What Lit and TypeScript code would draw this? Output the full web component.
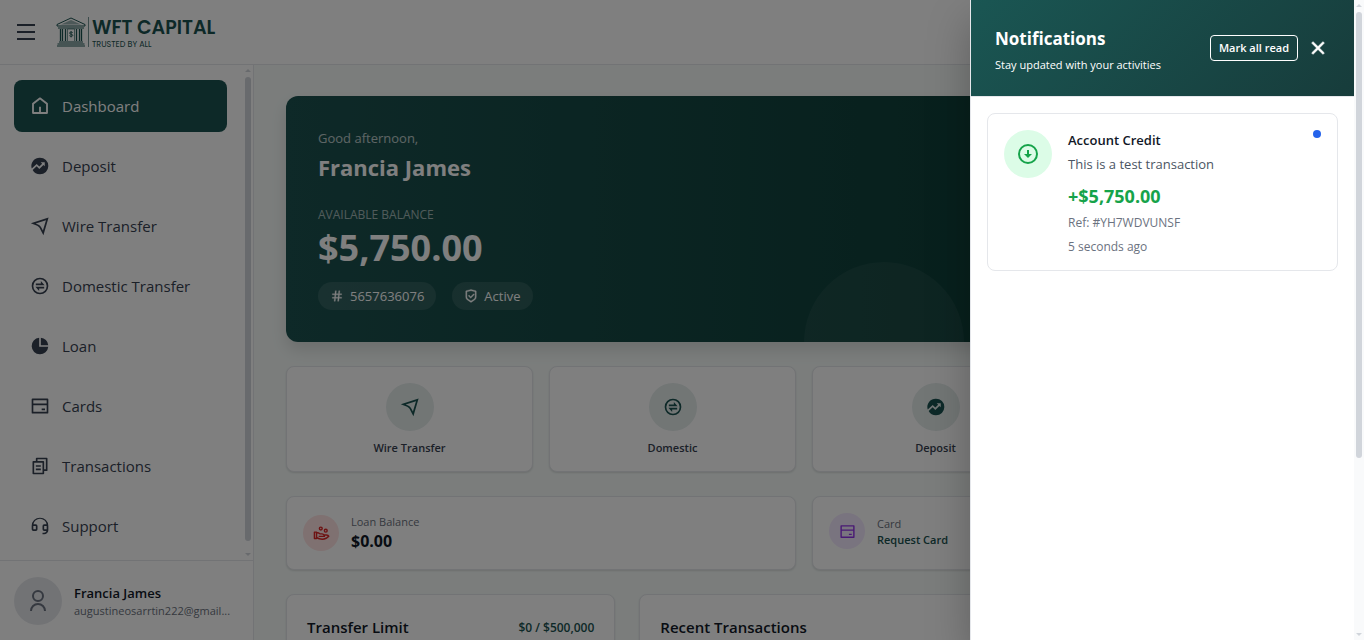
import { LitElement, html, css, svg } from "lit";
import { customElement, property, state } from "lit/decorators.js";
import { classMap } from "lit/directives/class-map.js";

const icons: Record<string, unknown> = {
  home: svg`<path fill-rule="evenodd" d="M21.500 20.500a1 1 0 0 1-1 1h-17a1 1 0 0 1-1-1V9.300a1 1 0 0 1 .4-.8l8.500-6.600a1 1 0 0 1 1.200 0l8.500 6.600a1 1 0 0 1 .4.8v11.200Zm-2.200-1.200V9.900L12 4.300 4.700 9.900v9.400h6.200V13h2.200v6.300h6.200Z"/>`,
  trend: svg`<path fill-rule="evenodd" d="M12 2a10 10 0 0 1 10 10 10 10 0 0 1-10 10A10 10 0 0 1 3.200 16.800L8 12.400l3.200 3.100 4.900-4.800 1.600 1.600V7.600h-4.900l1.800 1.700-3.400 3.400-3.200-3.200-5.900 5.600A10 10 0 0 1 12 2Z"/>`,
  plane: svg`<path fill-rule="evenodd" d="M1 8.700 22.300 1.900 16.100 23 11.400 14.200Q10.500 12.400 8.600 11.600ZM6.800 9.100l2.900 1.200q2.300.9 3.500 3l2.300 4.200L19.200 5Z"/>`,
  exchange: svg`<path fill-rule="evenodd" d="M12 22a10 10 0 1 1 0-20 10 10 0 0 1 0 20Zm0-2a8 8 0 1 0 0-16 8 8 0 0 0 0 16ZM7 9h6V6l4.500 5H7V9Zm10 4v2h-6v3l-4.500-5H17Z"/>`,
  pie: svg`<path d="M11 2.050V13h10.950A10 10 0 1 1 11 2.050ZM13 2.050A10 10 0 0 1 21.950 11H13V2.050Z"/>`,
  card: svg`<path fill-rule="evenodd" d="M3 3h18a1 1 0 0 1 1 1v16a1 1 0 0 1-1 1H3a1 1 0 0 1-1-1V4a1 1 0 0 1 1-1Zm17 8H4v8h16v-8Zm0-2V5H4v4h16Zm-6 6h4v2h-4v-2Z"/>`,
  copy: svg`<path fill-rule="evenodd" d="M7 6V3a1 1 0 0 1 1-1h12a1 1 0 0 1 1 1v14a1 1 0 0 1-1 1h-3v3a1 1 0 0 1-1 1H4a1 1 0 0 1-1-1V7a1 1 0 0 1 1-1h3ZM5 8v12h10V8H5Zm4-2h7a1 1 0 0 1 1 1v9h2V4H9v2ZM7 11h6v2H7v-2Zm0 4h6v2H7v-2Z"/>`,
  headset: svg`<path fill-rule="evenodd" d="M22 17a5 5 0 0 1-5 5h-2v-2h2a3 3 0 0 0 2.800-2H17a2 2 0 0 1-2-2v-4a2 2 0 0 1 2-2h2.900a8 8 0 0 0-15.800 0H7a2 2 0 0 1 2 2v4a2 2 0 0 1-2 2H4a2 2 0 0 1-2-2v-4a10 10 0 0 1 20 0v5ZM20 12h-3v4h3v-4ZM4 12v4h3v-4H4Z"/>`,
  user: svg`<path d="M4 22a8 8 0 1 1 16 0h-2a6 6 0 0 0-12 0H4Zm8-9a6 6 0 1 1 0-12 6 6 0 0 1 0 12Zm0-2a4 4 0 1 0 0-8 4 4 0 0 0 0 8Z"/>`,
  hash: svg`<path fill-rule="evenodd" d="M7.780 14 8.200 10H4V8h4.410l.530-5h2.010l-.520 5h3.980l.530-5h2.010l-.520 5H20v2h-3.780l-.420 4H20v2h-4.410l-.530 5h-2.010l.520-5H9.590l-.530 5H7.050l.520-5H4v-2h3.780Zm2.020 0h3.980l.420-4h-3.980l-.420 4Z" stroke="currentColor" stroke-width=".5"/>`,
  shield: svg`<path fill-rule="evenodd" stroke="currentColor" stroke-width=".6" d="m12 1 8.217 1.826a1 1 0 0 1 .783.976v9.987a6 6 0 0 1-2.672 4.992L12 23l-6.328-4.219A6 6 0 0 1 3 13.789V3.802a1 1 0 0 1 .783-.976L12 1Zm0 2.049L5 4.604v9.185a4 4 0 0 0 1.781 3.328L12 20.597l5.219-3.480A4 4 0 0 0 19 13.790V4.604L12 3.049Zm4.452 5.173 1.415 1.414L11.503 16 7.260 11.757l1.414-1.414 2.828 2.828 4.950-4.949Z"/>`,
  coins: svg`<path fill-rule="evenodd" d="M5 9a1 1 0 0 1 1 1 6.970 6.970 0 0 1 4.330 1.500h2.170c1.330 0 2.530.580 3.350 1.500H19a5 5 0 0 1 4.520 2.850C21.150 18.970 17.320 21 13 21c-2.790 0-5.150-.600-7.060-1.660A1 1 0 0 1 5 20H2a1 1 0 0 1-1-1v-9a1 1 0 0 1 1-1h3Zm1 3v5.020l.050.040C7.840 18.320 10.180 19 13 19c3 0 5.690-1.140 7.610-2.990l.130-.120A3 3 0 0 0 19 15h-2.110c.070.320.110.660.110 1v1H8v-2h6.790l-.030-.090a2.500 2.500 0 0 0-2.260-1.410H9.570A5 5 0 0 0 6 12ZM4 11H3v7h1v-7Zm14-6a3 3 0 1 1 0 6 3 3 0 0 1 0-6Zm0 2a1 1 0 1 0 0 2 1 1 0 0 0 0-2Zm-7-5a3 3 0 1 1 0 6 3 3 0 0 1 0-6Zm0 2a1 1 0 1 0 0 2 1 1 0 0 0 0-2Z"/>`,
  down: svg`<path fill-rule="evenodd" d="M12 2a10 10 0 1 1 0 20 10 10 0 0 1 0-20Zm0 18a8 8 0 1 0 0-16 8 8 0 0 0 0 16Zm1-8h3l-4 4-4-4h3V8h2v4Z"/>`,
  close: svg`<path d="m12 10.586 4.950-4.950 1.414 1.414L13.414 12l4.950 4.950-1.414 1.414L12 13.414l-4.950 4.950-1.414-1.414L10.586 12l-4.950-4.950L7.050 5.636 12 10.586Z" stroke="currentColor" stroke-width=".6"/>`,
  menu: svg`<path d="M3 4h18v2H3V4Zm0 7h18v2H3v-2Zm0 7h18v2H3v-2Z"/>`,
};

@customElement("ui-icon")
export class UiIcon extends LitElement {
  @property() name = "";
  static styles = css`
    :host { display: block; flex: none; width: 20px; height: 20px; }
    svg { display: block; width: 100%; height: 100%; }
  `;
  render() {
    return html`<svg viewBox="0 0 24 24" fill="currentColor" aria-hidden="true">${icons[this.name]}</svg>`;
  }
}

@customElement("scroll-track")
export class ScrollTrack extends LitElement {
  static styles = css`
    :host { display: flex; flex-direction: column; align-items: center; justify-content: space-between; width: 10px; padding: 4px 0; box-sizing: border-box; color: #d1d5db; }
    svg { display: block; width: 6px; height: 3px; fill: currentColor; }
    .lane { flex: 1; align-self: stretch; display: flex; flex-direction: column; margin: 5px 2px; }
    .thumb { border-radius: 3px; background: currentColor; }
  `;
  @property({ type: Number }) ratio = 1;
  render() {
    return html`
      <svg viewBox="0 0 6 3"><path d="M0 3 3 0l3 3Z" /></svg>
      <div class="lane"><div class="thumb" style="height:${this.ratio * 100}%"></div></div>
      <svg viewBox="0 0 6 3"><path d="M0 0h6L3 3Z" /></svg>
    `;
  }
}

const navItems = [
  ["home", "Dashboard"],
  ["trend", "Deposit"],
  ["plane", "Wire Transfer"],
  ["exchange", "Domestic Transfer"],
  ["pie", "Loan"],
  ["card", "Cards"],
  ["copy", "Transactions"],
  ["headset", "Support"],
];

const quickActions = [
  ["plane", "Wire Transfer"],
  ["exchange", "Domestic"],
  ["trend", "Deposit"],
];

@customElement("app-root")
export class AppRoot extends LitElement {
  @state() private active = "Dashboard";

  static styles = css`
    :host {
      display: grid;
      grid-template-columns: 1fr 10px;
      height: 100vh;
      overflow: hidden;
      font-family: "Segoe UI", "Open Sans", "Noto Sans", sans-serif;
      font-size: 15px;
      line-height: 24px;
      color: #111827;
      background: #f9fafb;
    }
    * { box-sizing: border-box; }
    h1, h2, h3, p { margin: 0; }
    a { color: inherit; text-decoration: none; }
    button { font: inherit; color: inherit; border: 0; background: none; padding: 0; cursor: pointer; }

    .page { position: relative; display: flex; flex-direction: column; min-width: 0; min-height: 0; overflow: hidden; background: #f6fbf9; }
    .topbar { display: flex; align-items: center; gap: 18px; flex: none; height: 65px; padding: 0 14px; background: #fff; border-bottom: 1px solid #e5e7eb; }
    .menu { color: #374151; }
    .menu ui-icon { width: 24px; height: 24px; }
    .brand { display: flex; align-items: center; color: #1a5250; }
    .brand svg { display: block; width: 34px; height: 30px; }
    .brand-text { display: flex; flex-direction: column; padding: 4px 0 0 2px; }
    .brand-name { font: 600 19px/22px Poppins, Inter, sans-serif; }
    .brand-tag { font: 400 8px/12px Poppins, Inter, sans-serif; }

    .columns { display: flex; flex: 1; min-height: 0; }
    .sidebar { display: flex; flex-direction: column; flex: none; width: 254px; background: #fff; border-right: 1px solid #e5e7eb; }
    .scroller { display: flex; flex: 1; min-height: 0; }
    nav { display: flex; flex: 1; flex-direction: column; gap: 8px; padding: 15px 16px 0 14px; }
    .nav-link { display: flex; align-items: center; gap: 12px; height: 52px; padding: 0 16px; border-radius: 8px; color: #374151; }
    .nav-link.active { background: #1a5250; color: #fff; }
    .profile { display: flex; align-items: center; gap: 12px; flex: none; height: 80px; padding: 0 14px; border-top: 1px solid #e5e7eb; }
    .avatar { display: grid; place-items: center; flex: none; width: 48px; height: 48px; border-radius: 50%; background: #e5e7eb; color: #6b7280; }
    .avatar ui-icon { width: 24px; height: 24px; }
    .who { flex: 1; min-width: 0; }
    .who-name { font-size: 13px; line-height: 20px; font-weight: 600; }
    .who-mail { font-size: 11px; line-height: 16px; color: #6b7280; white-space: nowrap; }

    main { display: flex; flex: 1; flex-direction: column; gap: 24px; min-width: 0; padding: 31px 32px 0; }
    .hero { position: relative; flex: none; padding: 32px; border-radius: 12px; overflow: hidden; color: #fff; background: linear-gradient(90deg, #1c5250, #0e3f38 70%, #0b3a33); }
    .hero-wrap { flex: none; border-radius: 12px; box-shadow: 0 8px 16px rgba(0, 0, 0, 0.12); }
    .bubble { position: absolute; left: 50%; bottom: -80px; width: 160px; height: 160px; border-radius: 50%; background: rgba(255, 255, 255, 0.05); }
    .greeting { font-size: 13px; line-height: 20px; opacity: 0.7; }
    .hero h1 { font-size: 22px; line-height: 32px; font-weight: 700; padding-top: 3px; }
    .caption { padding-top: 22px; font-size: 12px; line-height: 20px; color: rgba(255, 255, 255, 0.6); text-transform: uppercase; }
    .balance { font-size: 36px; line-height: 46px; font-weight: 700; }
    .chips { display: flex; gap: 16px; padding-top: 11px; }
    .chip { display: flex; align-items: center; gap: 6px; height: 28px; padding: 0 12px; border-radius: 14px; font-size: 13px; background: rgba(255, 255, 255, 0.1); }
    .chip ui-icon { width: 14px; height: 14px; }

    .card { background: #fff; border: 1px solid #e5e7eb; border-radius: 8px; box-shadow: 0 1px 2px rgba(0, 0, 0, 0.12); }
    .quick, .summary { display: grid; grid-template-columns: repeat(4, 1fr); gap: 16px; flex: none; }
    .action { display: flex; flex-direction: column; align-items: center; gap: 8px; padding: 16px 16px 14px; color: #374151; font-size: 11px; line-height: 18px; font-weight: 600; }
    .action .disc { width: 48px; height: 48px; background: #e4eceb; color: #1a5250; }
    .disc { display: grid; place-items: center; flex: none; width: 36px; height: 36px; border-radius: 50%; }
    .stat { grid-column: span 2; display: flex; align-items: center; gap: 12px; height: 74px; padding: 0 16px; }
    .stat.top { align-items: flex-start; padding-top: 16px; }
    .stat ui-icon { width: 17px; height: 17px; }
    .red { background: #fee2e2; color: #dc2626; }
    .purple { background: #f3e8ff; color: #9333ea; }
    .label { font-size: 11px; line-height: 16px; color: #6b7280; }
    .amount { font-size: 16px; line-height: 22px; font-weight: 700; }
    .stat-link { display: block; font-size: 11px; line-height: 16px; font-weight: 600; color: #1a5250; }
    .stat.top .text { padding-top: 3px; }
    .panels { display: grid; grid-template-columns: repeat(3, 1fr); gap: 24px; flex: 1; }
    .panel { display: flex; justify-content: space-between; align-items: flex-start; padding: 20px; }
    .panel.wide { grid-column: span 2; }
    .panel h2 { font-size: 15px; line-height: 24px; font-weight: 600; }
    .limit { font-size: 12px; line-height: 26px; font-weight: 600; color: #1a5250; }

    .backdrop { position: absolute; inset: 0; background: rgba(0, 0, 0, 0.5); }
    .drawer { position: absolute; top: 0; right: 0; bottom: 0; width: 384px; background: #fff; border-left: 1px solid #e5e7eb; box-shadow: 0 20px 40px rgba(0, 0, 0, 0.25); }
    .drawer-head { display: flex; align-items: center; justify-content: space-between; height: 97px; padding: 0 24px; color: #fff; background: linear-gradient(135deg, #1a5653, #173c3b); border-bottom: 1px solid #e5e7eb; }
    .drawer-head h2 { font-size: 17px; line-height: 28px; font-weight: 700; padding-top: 6px; }
    .drawer-head p { font-size: 11px; line-height: 24px; }
    .tools { display: flex; align-items: center; gap: 8px; }
    .mark { height: 26px; padding: 0 8px; border: 1px solid #fff; border-radius: 4px; font-size: 11px; line-height: 20px; font-weight: 600; }
    .tools ui-icon { width: 24px; height: 24px; }
    .list { padding: 16px; }
    .note { display: flex; gap: 16px; padding: 16px 16px 15px; border: 1px solid #e5e7eb; border-radius: 8px; }
    .note .disc { width: 48px; height: 48px; background: #dcfce7; color: #16a34a; }
    .note .disc ui-icon { width: 24px; height: 24px; }
    .note-body { flex: 1; font-size: 13px; }
    .note-title { display: flex; justify-content: space-between; }
    .note-title h3 { font-size: 13px; line-height: 20px; font-weight: 600; }
    .dot { width: 8px; height: 8px; border-radius: 50%; background: #2563eb; }
    .note-text { line-height: 28px; color: #4b5563; }
    .note-amount { font-size: 18px; line-height: 37px; font-weight: 700; color: #16a34a; }
    .note-meta { font-size: 12px; line-height: 16px; color: #6b7280; }
    .note-meta + .note-meta { padding-top: 8px; }
  `;

  private renderLogo() {
    return html`<svg viewBox="0 0 34 30" fill="none" stroke="currentColor" aria-hidden="true">
      <path d="M1 7.500 15 1l14 6.500v1.500H1Z" />
      <path d="M5 7.500 15 3l10 4.500Z" fill="currentColor" fill-opacity=".45" stroke="none" />
      <path d="M2 11h26M3 25h24M1.500 27h27M1 29h28" />
      <path d="M4.500 12v12M6.500 12v12M9.500 12v12M20.500 12v12M23.500 12v12M25.500 12v12" stroke-width="1.300" />
      <path d="M11.500 24V12h7v12" stroke-width=".6" />
      <path d="M16.700 15.600c-.500-.800-3.200-.900-3.200.500 0 1.500 3.300.700 3.300 2.200 0 1.400-2.900 1.300-3.400.300M15.100 14.200v6.200" stroke-width=".9" />
      <path d="M32.500 0v30" stroke-opacity=".6" />
    </svg>`;
  }

  render() {
    return html`
      <div class="page">
        <header class="topbar">
          <button class="menu" aria-label="Toggle menu"><ui-icon name="menu"></ui-icon></button>
          <a class="brand" href="#">
            ${this.renderLogo()}
            <span class="brand-text"><span class="brand-name">WFT CAPITAL</span><span class="brand-tag">TRUSTED BY ALL</span></span>
          </a>
        </header>
        <div class="columns">
          <aside class="sidebar">
            <div class="scroller">
              <nav>
                ${navItems.map(([icon, label]) => html`
                  <a href="#" class=${classMap({ "nav-link": true, active: this.active === label })} @click=${() => (this.active = label)}>
                    <ui-icon name=${icon}></ui-icon><span>${label}</span>
                  </a>`)}
              </nav>
              <scroll-track .ratio=${0.985}></scroll-track>
            </div>
            <div class="profile">
              <div class="avatar"><ui-icon name="user"></ui-icon></div>
              <div class="who">
                <p class="who-name">Francia James</p>
                <p class="who-mail">augustineosarrtin222@gmail...</p>
              </div>
            </div>
          </aside>
          <main>
            <div class="hero-wrap">
              <section class="hero">
                <div class="bubble"></div>
                <p class="greeting">Good afternoon,</p>
                <h1>Francia James</h1>
                <p class="caption">Available Balance</p>
                <p class="balance">$5,750.00</p>
                <div class="chips">
                  <span class="chip"><ui-icon name="hash"></ui-icon>5657636076</span>
                  <span class="chip"><ui-icon name="shield"></ui-icon>Active</span>
                </div>
              </section>
            </div>
            <section class="quick">
              ${quickActions.map(([icon, label]) => html`
                <a class="card action" href="#"><div class="disc"><ui-icon name=${icon}></ui-icon></div><span>${label}</span></a>`)}
            </section>
            <section class="summary">
              <div class="card stat">
                <div class="disc red"><ui-icon name="coins"></ui-icon></div>
                <div><p class="label">Loan Balance</p><p class="amount">$0.00</p></div>
              </div>
              <div class="card stat top">
                <div class="disc purple"><ui-icon name="card"></ui-icon></div>
                <div class="text"><p class="label">Card</p><a class="stat-link" href="#">Request Card</a></div>
              </div>
            </section>
            <section class="panels">
              <div class="card panel"><h2>Transfer Limit</h2><span class="limit">$0 / $500,000</span></div>
              <div class="card panel wide"><h2>Recent Transactions</h2></div>
            </section>
          </main>
        </div>
        <div class="backdrop"></div>
        <aside class="drawer" role="dialog" aria-label="Notifications">
          <header class="drawer-head">
            <div><h2>Notifications</h2><p>Stay updated with your activities</p></div>
            <div class="tools">
              <button class="mark">Mark all read</button>
              <button aria-label="Close"><ui-icon name="close"></ui-icon></button>
            </div>
          </header>
          <div class="list">
            <article class="note">
              <div class="disc"><ui-icon name="down"></ui-icon></div>
              <div class="note-body">
                <div class="note-title"><h3>Account Credit</h3><span class="dot"></span></div>
                <p class="note-text">This is a test transaction</p>
                <p class="note-amount">+$5,750.00</p>
                <p class="note-meta">Ref: #YH7WDVUNSF</p>
                <p class="note-meta">5 seconds ago</p>
              </div>
            </article>
          </div>
        </aside>
      </div>
      <scroll-track .ratio=${0.724}></scroll-track>
    `;
  }
}
